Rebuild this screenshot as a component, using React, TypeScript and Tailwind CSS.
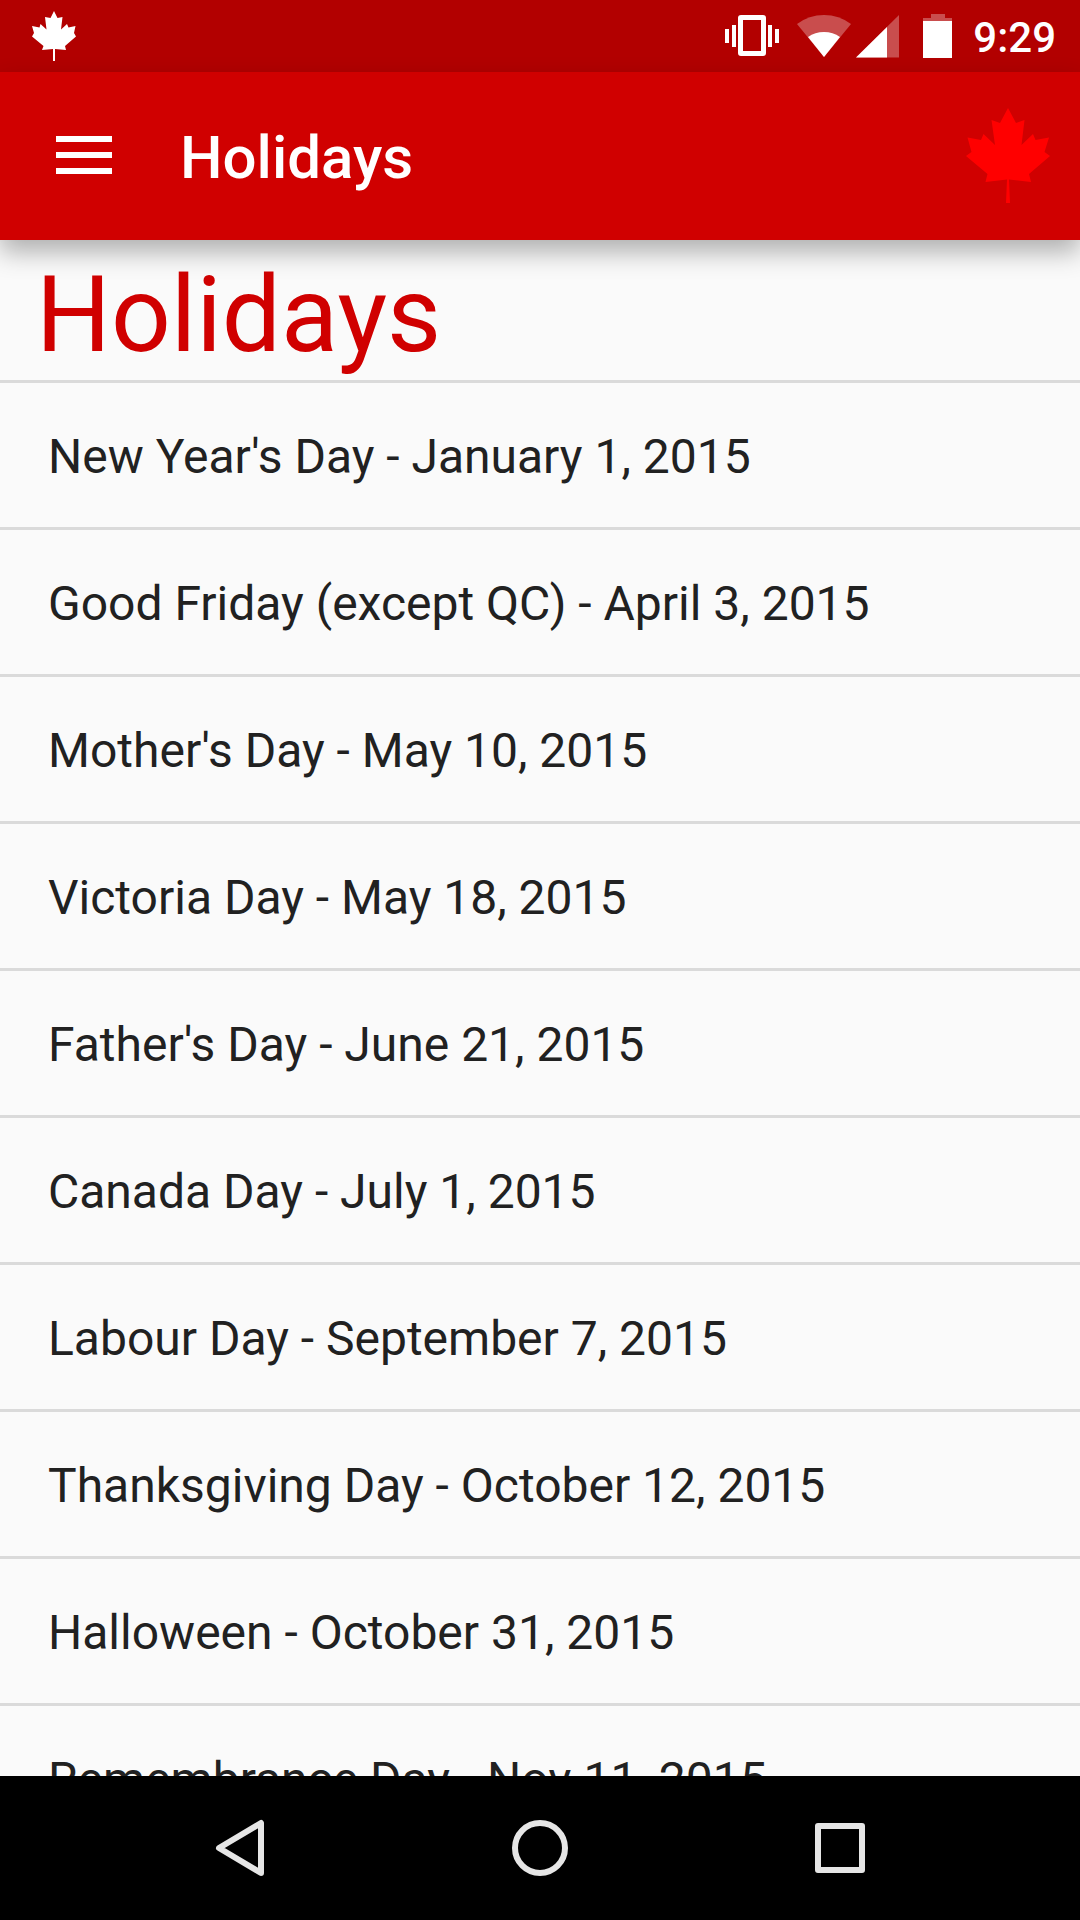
const holidays = [
  "New Year's Day - January 1, 2015",
  "Good Friday (except QC) - April 3, 2015",
  "Mother's Day - May 10, 2015",
  "Victoria Day - May 18, 2015",
  "Father's Day - June 21, 2015",
  "Canada Day - July 1, 2015",
  "Labour Day - September 7, 2015",
  "Thanksgiving Day - October 12, 2015",
  "Halloween - October 31, 2015",
  "Remembrance Day - Nov 11, 2015",
];

function AppLeaf({ className }: { className: string }) {
  return (
    <svg viewBox="0 0 84 95" className={className} fill="currentColor" aria-hidden="true">
      <path d="M42 0 L34 15 L25.500 12 L29 37 L17.500 26 L15 32 L1.500 29.500 L5.500 44 L0 48 L21.500 66 L19.500 74 L41 71.500 L40 95 L44 95 L43 71.500 L65 74 L63 66 L84 48 L78.500 44 L83 29.500 L69.500 32 L67 26 L55.500 37 L58.500 12 L50 15 Z" />
    </svg>
  );
}

function NotificationLeaf() {
  return (
    <svg viewBox="0 0 44 50" className="h-[50px] w-11" fill="white" aria-hidden="true">
      <path d="M22 0 L18.500 7 L13 6 L14.500 18.500 L8.500 13 L7.500 16.500 L0 15 L2 22 L0 25.500 L11.500 35 L10 39 L21 38 L21 50 L23 50 L23 38 L34 39 L33 35 L44 25.500 L42 22 L43.500 15 L36.500 16.500 L35 13 L29 18.500 L30.500 6 L25.500 7 Z" />
    </svg>
  );
}

function StatusBar() {
  return (
    <div className="flex h-[72px] shrink-0 items-center bg-[#b20000] pl-8 pr-6 text-white">
      <NotificationLeaf />
      <div className="ml-auto flex items-center">
        <svg viewBox="0 0 54 42" className="h-[42px] w-[54px]" fill="white" aria-hidden="true">
          <rect x="0" y="14" width="4" height="14" />
          <rect x="7" y="10" width="4" height="22" />
          <path fillRule="evenodd" d="M16 0 H38 Q41 0 41 3 V38 Q41 41 38 41 H16 Q13 41 13 38 V3 Q13 0 16 0 Z M18 5 V36 H36 V5 Z" />
          <rect x="43" y="10" width="4" height="22" />
          <rect x="50" y="14" width="4" height="14" />
        </svg>
        <svg viewBox="0 0 54 44" className="ml-[18px] h-11 w-[54px]" fill="white" aria-hidden="true">
          <path fillOpacity="0.3" d="M0 10 Q12 1 27 1 Q42 1 54 10 L27 43 Z" />
          <path d="M11 23 Q18 18 27 18 Q36 18 43 23 L27 43 Z" />
        </svg>
        <svg viewBox="0 0 43 44" className="ml-[5px] h-11 w-[43px]" fill="white" aria-hidden="true">
          <path fillOpacity="0.3" d="M43 1 V43.500 H0 Z" />
          <path d="M31 13 V43.500 H0 Z" />
        </svg>
        <svg viewBox="0 0 30 44" className="ml-6 h-11 w-[30px]" fill="white" aria-hidden="true">
          <path fillOpacity="0.3" d="M8 0 H22 V4 H29 V7 H0 V4 H8 Z" />
          <rect x="0" y="7" width="29" height="37" />
        </svg>
        <time className="ml-5 pt-1 text-[42px] font-medium leading-none">9:29</time>
      </div>
    </div>
  );
}

export default function App() {
  return (
    <div className="flex h-screen flex-col overflow-hidden bg-[#fafafa] font-['Roboto',sans-serif]">
      <StatusBar />
      <header className="relative z-10 flex h-[168px] shrink-0 items-center bg-[#d00000] pb-0.5 pl-14 pr-[30px] text-white shadow-[0_12px_24px_rgba(0,0,0,0.3)]">
        <button type="button" aria-label="Open menu" className="flex flex-col gap-2.5">
          <span className="h-1.5 w-14 bg-white" />
          <span className="h-1.5 w-14 bg-white" />
          <span className="h-1.5 w-14 bg-white" />
        </button>
        <span className="ml-[68px] pt-1.5 text-[60px] font-medium leading-[70px]">Holidays</span>
        <AppLeaf className="ml-auto h-[95px] w-[84px] text-[#ff0000]" />
      </header>
      <main className="min-h-0 flex-1 overflow-hidden">
        <h1 className="px-9 pt-3 text-[105px] leading-[128px] text-[#d00000]">Holidays</h1>
        <ul>
          {holidays.map((holiday) => (
            <li key={holiday} className="border-t-[3px] border-[#dadada] px-12 pt-1 text-[48px] leading-[140px] text-[#212121]">
              {holiday}
            </li>
          ))}
        </ul>
      </main>
      <nav aria-label="System" className="flex h-36 shrink-0 items-center justify-center gap-[156px] bg-black">
        <button type="button" aria-label="Back" className="flex h-36 w-36 items-center justify-center">
          <svg viewBox="0 0 60 60" className="size-[60px]" fill="none" stroke="#e6e6e6" strokeWidth="6" strokeLinejoin="round" aria-hidden="true">
            <path d="M51 5 V55 L9 30 Z" />
          </svg>
        </button>
        <button type="button" aria-label="Home" className="flex h-36 w-36 items-center justify-center">
          <svg viewBox="0 0 60 60" className="size-[60px]" fill="none" stroke="#e6e6e6" strokeWidth="6" aria-hidden="true">
            <circle cx="30" cy="30" r="25" />
          </svg>
        </button>
        <button type="button" aria-label="Recent apps" className="flex h-36 w-36 items-center justify-center">
          <svg viewBox="0 0 60 60" className="size-[60px]" fill="none" stroke="#e6e6e6" strokeWidth="6" strokeLinejoin="round" aria-hidden="true">
            <rect x="8" y="8" width="44" height="44" />
          </svg>
        </button>
      </nav>
    </div>
  );
}
